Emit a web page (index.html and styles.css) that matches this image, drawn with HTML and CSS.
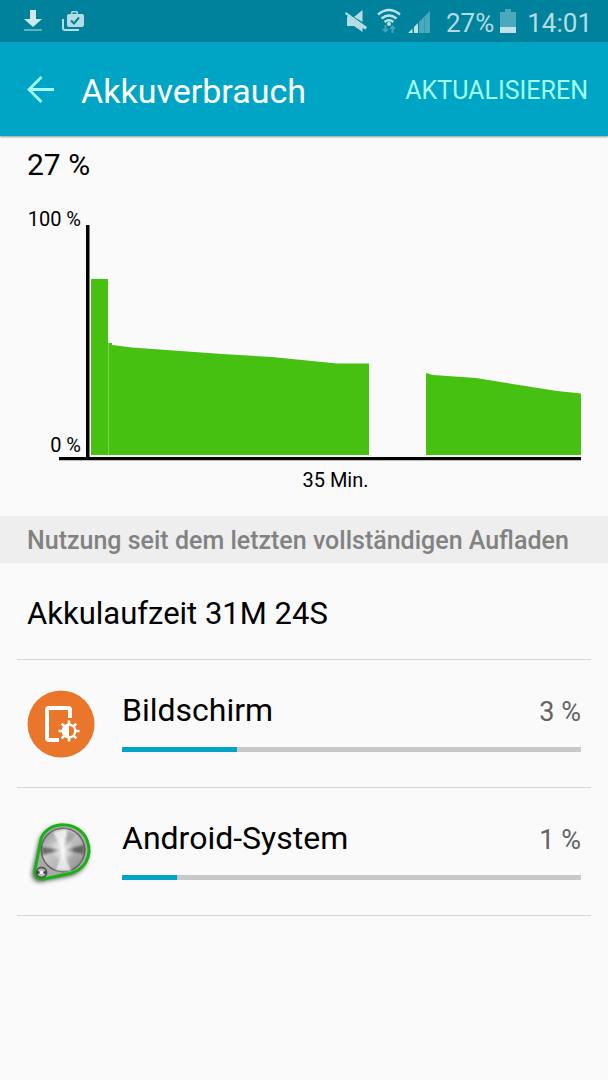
FILE: index.html
```html
<!DOCTYPE html>
<html lang="de">
<head>
<meta charset="utf-8">
<meta name="viewport" content="width=device-width, initial-scale=1">
<title>Akkuverbrauch</title>
<link rel="stylesheet" href="styles.css">
</head>
<body>
<div class="status-bar">
  <div class="status-group notifications">
    <svg width="18" height="22" viewBox="0 0 18 22" aria-hidden="true"><path fill="#cfeaef" d="M6 0h6v9h6l-9 8-9-8h6z"/><path fill="#5bb3c4" d="M0 19h18v2H0z"/></svg>
    <svg width="22" height="22" viewBox="0 0 22 22" aria-hidden="true"><path fill="none" stroke="#b4dce4" stroke-width="2" d="M1 9v9q0 2 2 2h14"/><path fill="#b4dce4" fill-rule="evenodd" d="M9 4V2.500q0-1.500 1.500-1.500h4q1.500 0 1.500 1.500V4h4q2 0 2 2v9q0 2-2 2H7q-2 0-2-2V6q0-2 2-2zM10.500 4h4V2.500h-4z"/><path fill="none" stroke="#00829d" stroke-width="2" d="M9 10.500l3 3 5-6"/></svg>
  </div>
  <div class="status-group">
    <svg class="mute" width="22" height="24" viewBox="0 0 22 24" aria-hidden="true"><path fill="#b4dce4" d="M17.500 1v12L9 8z"/><path fill="#b4dce4" d="M1 3l21 15-1.500 2.500-3-1.500v4L9 17H2V8l1-1-3-2z"/></svg>
    <svg class="wifi" width="24" height="26" viewBox="0 0 24 26" aria-hidden="true"><path fill="none" stroke="#c1e2e8" stroke-width="2.300" d="M1 6.500q11-9 22 0M4.500 10.500q7.500-6 15 0M7.500 14q4.500-3.500 9 0"/><circle cx="12" cy="16" r="2" fill="#c1e2e8"/><path fill="#43a4b8" d="M7.500 17h2v4H12l-3.500 4L5 21h2.500zM14.500 25h2v-4H19l-3.500-4-3.500 4h2.500z"/></svg>
    <svg class="signal" width="23" height="23" viewBox="0 0 23 23" aria-hidden="true"><path fill="#c1e2e8" d="M0 23l4.500-4.500V23zM6 23v-6l4-4v10z"/><path fill="#4ba9bd" d="M11 23V12L22 1v22z"/><path stroke="#319bb1" d="M16.500 7v16"/></svg>
    <span>27%</span>
    <svg class="battery" width="16" height="24" viewBox="0 0 16 24" aria-hidden="true"><path fill="#4ba9bd" d="M5 0h6v3h5v21H0V3h5z"/><path fill="#c1e2e8" d="M0 18h16v6H0z"/></svg>
    <time>14:01</time>
  </div>
</div>
<header class="app-bar">
  <button class="back" type="button" aria-label="Zurück">
    <svg width="27" height="27" viewBox="0 0 27 27" aria-hidden="true"><path fill="none" stroke="#a4fff3" stroke-width="2.800" d="M27 13.500H2M14.500 1L2 13.500 14.500 26"/></svg>
  </button>
  <h1 class="title">Akkuverbrauch</h1>
  <button class="refresh" type="button">AKTUALISIEREN</button>
</header>
<main>
  <section class="overview">
    <p class="level">27 %</p>
    <div class="chart">
      <div class="scale"><span>100 %</span><span>0 %</span></div>
      <svg class="plot" viewBox="0 0 495 236" preserveAspectRatio="none" role="img" aria-label="Akkuladung über 35 Minuten">
        <path fill="#46c011" d="M5 54h17v176H5zM22 118h4v2l20 2.500 90 6.500 50 3 65 6.500h32v91.500H22zM340 148l7 2 43 3 81 13 24 2.500v61.500H340z"/>
        <path stroke="#7bd253" d="M22.500 118v112"/>
        <path fill="#000" d="M0 0h3.500v232H0zM-27 232h522v3.300H-27z"/>
      </svg>
      <p class="duration">35 Min.</p>
    </div>
  </section>
  <h2 class="section-title">Nutzung seit dem letzten vollständigen Aufladen</h2>
  <p class="runtime">Akkulaufzeit 31M 24S</p>
  <ul class="usage">
    <li class="item">
      <svg class="icon" viewBox="0 0 68 68" aria-hidden="true">
        <circle cx="34" cy="34" r="33.500" fill="#e9762b"/>
        <path fill="none" stroke="#fff" stroke-width="4" d="M43 28V20q0-2-2-2H22q-2 0-2 2v28q0 2 2 2h10"/>
        <g transform="translate(42 41)">
          <circle r="9.500" fill="#e9762b"/>
          <path stroke="#fff" stroke-width="2.600" d="M0-10.500v21M-10.500 0h21M-7.300-7.300l14.600 14.600M7.300-7.300L-7.300 7.300"/>
          <circle r="6.300" fill="#e9762b" stroke="#fff" stroke-width="2.200"/>
          <path fill="#fff" d="M0-6a6 6 0 0 0 0 12z"/>
        </g>
      </svg>
      <div class="details">
        <label class="name" for="display-usage">Bildschirm</label><span class="percent">3 %</span>
        <progress id="display-usage" class="meter" value="25" max="100"></progress>
      </div>
    </li>
    <li class="item">
      <svg class="icon" viewBox="0 -1 68 68" aria-hidden="true">
        <defs>
          <linearGradient id="metal" x1="0" y1="0" x2="1" y2="1"><stop offset="0" stop-color="#888"/><stop offset=".35" stop-color="#ccc"/><stop offset=".6" stop-color="#b6b6b6"/><stop offset="1" stop-color="#888"/></linearGradient>
          <radialGradient id="shine"><stop offset="0" stop-color="#fff" stop-opacity=".9"/><stop offset="1" stop-color="#fff" stop-opacity="0"/></radialGradient>
          <filter id="soft" x="-20%" y="-20%" width="140%" height="140%"><feGaussianBlur stdDeviation="2"/></filter>
          <filter id="brushed" x="-20%" y="-20%" width="140%" height="140%"><feGaussianBlur stdDeviation="1.2"/></filter>
        </defs>
        <path fill="#333" opacity=".75" filter="url(#soft)" d="M12 21C20 1 53 1 60 24c5 17-3 31-20 34l-26 5c-6 1-10-4-9-10z"/>
        <path fill="#aaa" stroke="#12b412" stroke-width="3" d="M14 20C21 1 52 1 60 21c6 16-2 31-20 34l-23 5c-6 1-10-3-9-9z"/>
        <circle cx="36" cy="31" r="22.500" fill="#666"/>
        <circle cx="36" cy="31" r="21" fill="url(#metal)"/>
        <g filter="url(#brushed)">
          <path fill="#333" opacity=".6" d="M36 31l-21-3v8zM36 31l21-5v9z"/>
          <path fill="#fff" opacity=".7" d="M36 31L26 13l14-3zM36 31l-7 20 15 1z"/>
          <path fill="#777" opacity=".4" d="M36 31l5-20 8 5z"/>
        </g>
        <circle cx="36" cy="31" r="12" fill="url(#shine)"/>
        <circle cx="14.500" cy="53.500" r="5" fill="#bbb" stroke="#555" stroke-width="1.800"/>
        <path fill="#444" d="M14.500 53.500l-5-2v4zM14.500 53.500l5-2v4z"/><circle cx="14.500" cy="53.500" r="1.800" fill="#fff"/>
      </svg>
      <div class="details">
        <label class="name" for="system-usage">Android-System</label><span class="percent">1 %</span>
        <progress id="system-usage" class="meter" value="12" max="100"></progress>
      </div>
    </li>
  </ul>
</main>
</body>
</html>
```
FILE: styles.css
```css
* { box-sizing: border-box; }

body {
  margin: 0;
  min-height: 100vh;
  background: #fafafa;
  color: #000;
  font-family: Roboto, "Liberation Sans", sans-serif;
}

h1, h2, p, ul { margin: 0; padding: 0; font-weight: 400; }
svg { display: block; flex: none; }
button { padding: 0; border: 0; background: none; font-family: inherit; }

.status-bar {
  display: flex;
  justify-content: space-between;
  align-items: center;
  height: 42px;
  padding: 0 16px 0 24px;
  background: #00829d;
  color: #b4dce4;
  font-size: 26px;
  line-height: 42px;
}
.status-group { display: flex; align-items: center; }
.status-group span, .status-group time { padding-top: 3px; }
.notifications { gap: 20px; }
.wifi { margin-left: 10px; }
.signal { margin: 0 15px 0 7px; }
.battery { margin: 0 11px 0 6px; }

.app-bar {
  display: flex;
  align-items: center;
  height: 94px;
  padding: 0 20px 0 27px;
  background: #00a5c6;
  box-shadow: 0 1px 2px #00000066;
}
.title {
  flex: 1;
  margin-left: 27px;
  padding-top: 3px;
  color: #fff;
  font-size: 34px;
  line-height: 40px;
}
.refresh {
  padding-top: 4px;
  color: #a4fff3;
  font-size: 25px;
  line-height: 32px;
}

.overview { padding: 11px 27px 0; }
.level { font-size: 30px; line-height: 36px; }

.chart {
  display: grid;
  grid-template-columns: 54px 1fr;
  column-gap: 5px;
  margin-top: 24px;
  font-size: 20px;
  line-height: 24px;
}
.scale {
  display: flex;
  flex-direction: column;
  justify-content: space-between;
  align-items: flex-end;
  padding-bottom: 4px;
  white-space: nowrap;
}
.plot { width: 100%; height: 236px; margin-top: 18px; overflow: visible; }
.duration { grid-column: 2; padding: 7px 0 24px 4px; text-align: center; }

.section-title {
  padding: 9px 27px 6px;
  background: #eee;
  color: #828282;
  font-size: 25px;
  font-weight: 500;
  line-height: 32px;
}
.runtime {
  margin: 0 17px;
  padding: 31px 10px 25px;
  border-bottom: 1px solid #d6d6d6;
  font-size: 31px;
  line-height: 40px;
}

.usage { list-style: none; }
.item {
  display: flex;
  align-items: center;
  gap: 27px;
  height: 128px;
  margin: 0 17px;
  padding: 0 10px;
  border-bottom: 1px solid #d6d6d6;
}
.icon { width: 68px; height: 68px; }
.details {
  flex: 1;
  display: grid;
  grid-template-columns: 1fr auto;
  align-items: center;
  padding-bottom: 6px;
}
.name { font-size: 32px; line-height: 40px; }
.percent { padding-top: 4px; color: #646464; font-size: 27px; line-height: 36px; }
.meter {
  grid-column: 1 / -1;
  width: 100%;
  height: 5px;
  margin-top: 17px;
  border: 0;
  background: #c8c8c8;
  appearance: none;
}
.meter::-webkit-progress-bar { background: #c8c8c8; }
.meter::-webkit-progress-value { background: #00a5c6; }
```
